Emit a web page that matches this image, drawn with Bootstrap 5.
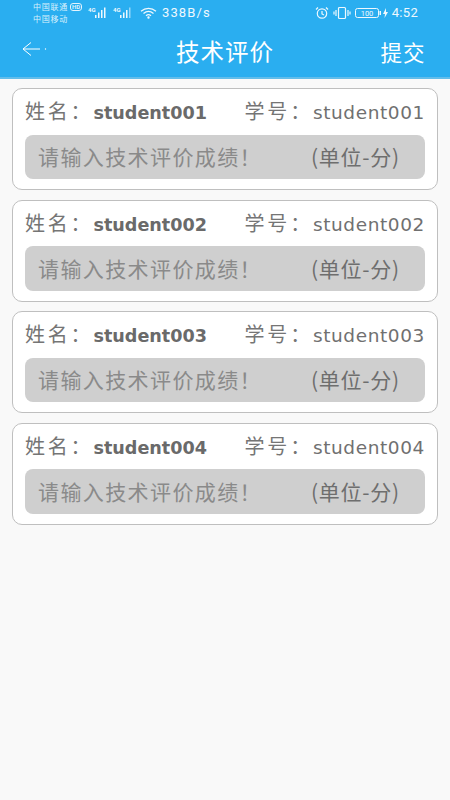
<!DOCTYPE html>
<html lang="zh">
<head>
<meta charset="utf-8">
<title>技术评价</title>
<link href="https://cdn.jsdelivr.net/npm/bootstrap@5.3.0/dist/css/bootstrap.min.css" rel="stylesheet">
<style>
html,body{height:100%}
body{width:450px;height:800px;overflow:hidden;background:#f9f9f9;font-family:"Roboto","Noto Sans CJK SC",sans-serif;color:#666}
.top-area{background:#2aaef0;height:79px;color:#fff;border-bottom:2px solid #62bdea}
.status-row{height:26px;padding:0 32px 0 33px}
.carriers{font-size:8px;line-height:12px;width:51px;color:#d9f0fc;margin-top:-1px;font-family:"Noto Sans CJK SC",sans-serif;letter-spacing:.75px}
.carriers .hd{display:inline-block;border:1px solid #e4f4fd;border-radius:3px;font-size:6px;line-height:6px;padding:0 1px;vertical-align:1px;font-family:"Roboto",sans-serif;font-weight:700;margin-left:2px;letter-spacing:0}
.speed{font-size:13px;letter-spacing:1.100px;color:#eef8fe;margin-left:5px}
.clock{font-size:13px;color:#eef8fe;letter-spacing:.3px}
.title-row{height:51px;padding:0 25px 0 22px}
.back-icon{width:26px;height:16px;margin-top:-5px}
.page-title{font-size:23.500px;letter-spacing:1px;font-family:"Noto Sans CJK SC",sans-serif;left:0;right:0;text-align:center;line-height:1.2}
.submit-link{font-size:21.500px;letter-spacing:1px;margin-right:-.5px;font-family:"Noto Sans CJK SC",sans-serif;line-height:1.2}
.score-list{padding:9px 12px 0;gap:9.600px}
.score-card{height:102px;border:1px solid #bfbfbf;border-radius:10px;background:#fff;padding:0 12px}
.name-row{height:45.500px;font-size:18.500px;line-height:43px;white-space:nowrap;color:#707070;font-family:"DejaVu Sans","Noto Sans CJK SC",sans-serif}
.name-cjk{font-size:20px;letter-spacing:2.800px;font-family:"Noto Sans CJK SC",sans-serif;color:#757575}
.name-row b{color:#6a6a6a;font-weight:700;font-size:17.600px}
.id-text{letter-spacing:.6px}
.score-input{height:44.500px;background:#cfcfcf;border-radius:8px;padding:0 26px 0 13px;font-size:21px;color:#8a8a8a;font-family:"Noto Sans CJK SC",sans-serif;letter-spacing:1.400px}
.unit{color:#6e6e6e;letter-spacing:.7px;margin-right:-.7px}
</style>
</head>
<body>
<header class="top-area">
  <div class="status-row d-flex align-items-center">
    <div class="carriers"><div class="text-nowrap">中国联通<span class="hd">HD</span></div><div class="text-nowrap">中国移动</div></div>
    <svg width="48" height="14" viewBox="0 0 48 14" fill="#eef8fe" class="signal-icon ms-1">
      <text x="0" y="6" font-size="6" font-family="Roboto" font-weight="700">4G</text>
      <rect x="7" y="9" width="1.500" height="3"/><rect x="10" y="6.500" width="1.500" height="5.500"/><rect x="13" y="4" width="1.500" height="8"/><rect x="16" y="1.500" width="1.500" height="10.500"/>
      <text x="25" y="6" font-size="6" font-family="Roboto" font-weight="700">4G</text>
      <rect x="32" y="9" width="1.500" height="3"/><rect x="35" y="6.500" width="1.500" height="5.500"/><rect x="38" y="4" width="1.500" height="8"/><rect x="41" y="1.500" width="1.500" height="10.500" opacity=".55"/>
    </svg>
    <svg width="17" height="12" viewBox="0 0 17 12" fill="none" stroke="#eef8fe" stroke-width="1.200" class="ms-1">
      <path d="M1 4.200C5.500.4 11.500.4 16 4.200"/><path d="M3.500 6.500c3-2.600 7-2.600 10 0"/><path d="M6 8.800c1.500-1.300 3.500-1.300 5 0"/><circle cx="8.500" cy="10.500" r=".6" fill="#eef8fe"/>
    </svg>
    <span class="speed">338B/s</span>
    <div class="ms-auto d-flex align-items-center">
      <svg width="14" height="14" viewBox="0 0 14 14" fill="none" stroke="#eef8fe" stroke-width="1.200"><circle cx="7" cy="7.500" r="4.700"/><path d="M7 5v3l2 1M1 3.500 3 1.500M13 3.500 11 1.500"/></svg>
      <svg width="18" height="14" viewBox="0 0 18 14" fill="none" stroke="#eef8fe" stroke-width="1.200" class="ms-1"><rect x="5.500" y="1.500" width="7" height="11" rx="1"/><path d="M3 4v6M15 4v6M1 5.500v3M17 5.500v3"/></svg>
      <svg width="28" height="12" viewBox="0 0 28 12" class="ms-1"><rect x=".5" y="1.500" width="23" height="9" rx="2" fill="none" stroke="#eef8fe"/><rect x="24.500" y="4" width="1.500" height="4" fill="#eef8fe"/><text x="12" y="9" font-size="7.500" text-anchor="middle" fill="#eef8fe" font-family="Roboto">100</text></svg>
      <svg width="5" height="10" viewBox="0 0 5 10" fill="#eef8fe"><path d="M3 0 0 6h2l-.5 4L5 4H3z"/></svg>
      <span class="clock ms-1">4:52</span>
    </div>
  </div>
  <div class="title-row d-flex align-items-center justify-content-between position-relative">
    <svg class="back-icon" viewBox="0 0 26 16" fill="none" stroke="#fff" stroke-width="1"><path d="M9 1.500 1 8l8 6.500M1 8h17"/><circle cx="23.500" cy="8" r=".7" fill="#fff" stroke="none"/></svg>
    <div class="page-title position-absolute">技术评价</div>
    <span class="submit-link">提交</span>
  </div>
</header>
<main class="score-list d-flex flex-column">
  <section class="score-card">
    <div class="name-row d-flex justify-content-between"><span><span class="name-cjk">姓名：</span><b>student001</b></span><span class="id-text"><span class="name-cjk">学号：</span>student001</span></div>
    <div class="score-input d-flex align-items-center justify-content-between"><span>请输入技术评价成绩！</span><span class="unit">(单位-分)</span></div>
  </section>
  <section class="score-card">
    <div class="name-row d-flex justify-content-between"><span><span class="name-cjk">姓名：</span><b>student002</b></span><span class="id-text"><span class="name-cjk">学号：</span>student002</span></div>
    <div class="score-input d-flex align-items-center justify-content-between"><span>请输入技术评价成绩！</span><span class="unit">(单位-分)</span></div>
  </section>
  <section class="score-card">
    <div class="name-row d-flex justify-content-between"><span><span class="name-cjk">姓名：</span><b>student003</b></span><span class="id-text"><span class="name-cjk">学号：</span>student003</span></div>
    <div class="score-input d-flex align-items-center justify-content-between"><span>请输入技术评价成绩！</span><span class="unit">(单位-分)</span></div>
  </section>
  <section class="score-card">
    <div class="name-row d-flex justify-content-between"><span><span class="name-cjk">姓名：</span><b>student004</b></span><span class="id-text"><span class="name-cjk">学号：</span>student004</span></div>
    <div class="score-input d-flex align-items-center justify-content-between"><span>请输入技术评价成绩！</span><span class="unit">(单位-分)</span></div>
  </section>
</main>
<script src="https://cdn.jsdelivr.net/npm/bootstrap@5.3.0/dist/js/bootstrap.bundle.min.js"></script>
</body>
</html>
